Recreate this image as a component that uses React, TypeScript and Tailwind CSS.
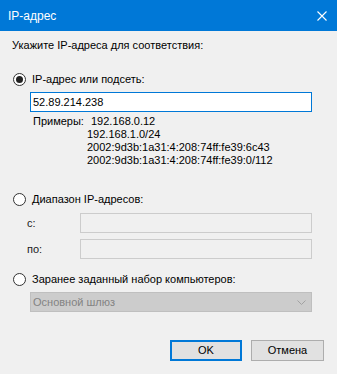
import React from 'react';

const Radio = ({ checked, label }: { checked?: boolean; label: string }) => (
  <div className="flex items-center h-[13px] leading-[13px] pl-[13px]">
    <span className="w-[13px] h-[13px] rounded-full border border-[#333333] bg-white flex items-center justify-center shrink-0">
      {checked && <span className="w-[7px] h-[7px] rounded-full bg-[#222222]" />}
    </span>
    <span className="ml-[6px]">{label}</span>
  </div>
);

const examples = ['192.168.1.0/24', '2002:9d3b:1a31:4:208:74ff:fe39:6c43', '2002:9d3b:1a31:4:208:74ff:fe39:0/112'];

export default function App() {
  return (
    <div
      className="w-[337px] h-[374px] bg-[#f0f0f0] flex flex-col text-[11px] text-black"
      style={{ fontFamily: '"Liberation Sans", Arial, sans-serif' }}
    >
      {/* title bar */}
      <div className="h-[31px] bg-[#0078d7] flex items-center justify-between pl-[8px] pr-[10px] text-white text-[12px]">
        <span>IP-адрес</span>
        <svg width="10" height="10" viewBox="0 0 10 10" className="mr-[0px]">
          <path d="M0.5 0.5 L9.5 9.5 M9.5 0.5 L0.5 9.5" stroke="white" strokeWidth="1.1" />
        </svg>
      </div>

      <div className="mt-[8px] pl-[12px] leading-[13px] h-[13px]">Укажите IP-адреса для соответствия:</div>

      <div className="mt-[21px]">
        <Radio checked label="IP-адрес или подсеть:" />
      </div>

      <div className="mt-[6px] ml-[30px] w-[282px] h-[20px] border border-[#0078d7] bg-white flex items-center pl-[2px]">
        52.89.214.238
      </div>

      <div className="mt-[3px] ml-[33px] flex leading-[13px]">
        <div className="w-[54px]">Примеры:</div>
        <div className="flex flex-col">
          <span className="pl-[4px]">192.168.0.12</span>
          {examples.map((e) => (
            <span key={e}>{e}</span>
          ))}
        </div>
      </div>

      <div className="mt-[26px]">
        <Radio label="Диапазон IP-адресов:" />
      </div>

      <div className="mt-[7px] flex items-center h-[20px]">
        <span className="w-[80px] pl-[27px] text-[#1a1a1a]">с:</span>
        <div className="w-[232px] h-[20px] border border-[#cccccc]" />
      </div>
      <div className="mt-[6px] flex items-center h-[20px]">
        <span className="w-[80px] pl-[27px] text-[#1a1a1a]">по:</span>
        <div className="w-[232px] h-[20px] border border-[#cccccc]" />
      </div>

      <div className="mt-[14px]">
        <Radio label="Заранее заданный набор компьютеров:" />
      </div>

      <div className="mt-[6px] ml-[30px] w-[282px] h-[20px] border border-[#bfbfbf] bg-[#cccccc] flex items-center justify-between pl-[2px] pr-[5px] text-[#838383]">
        <span>Основной шлюз</span>
        <svg width="9" height="5" viewBox="0 0 9 5">
          <path d="M0.5 0.5 L4.5 4.5 L8.5 0.5" stroke="#a2a2a2" fill="none" strokeWidth="1" />
        </svg>
      </div>

      <div className="mt-[28px] flex justify-end gap-[9px] pr-[13px]">
        <button className="w-[72px] h-[21px] border-2 border-[#0078d7] bg-[#e1e1e1] flex items-center justify-center">
          OK
        </button>
        <button className="w-[73px] h-[21px] border border-[#adadad] bg-[#e1e1e1] flex items-center justify-center">
          Отмена
        </button>
      </div>
    </div>
  );
}
